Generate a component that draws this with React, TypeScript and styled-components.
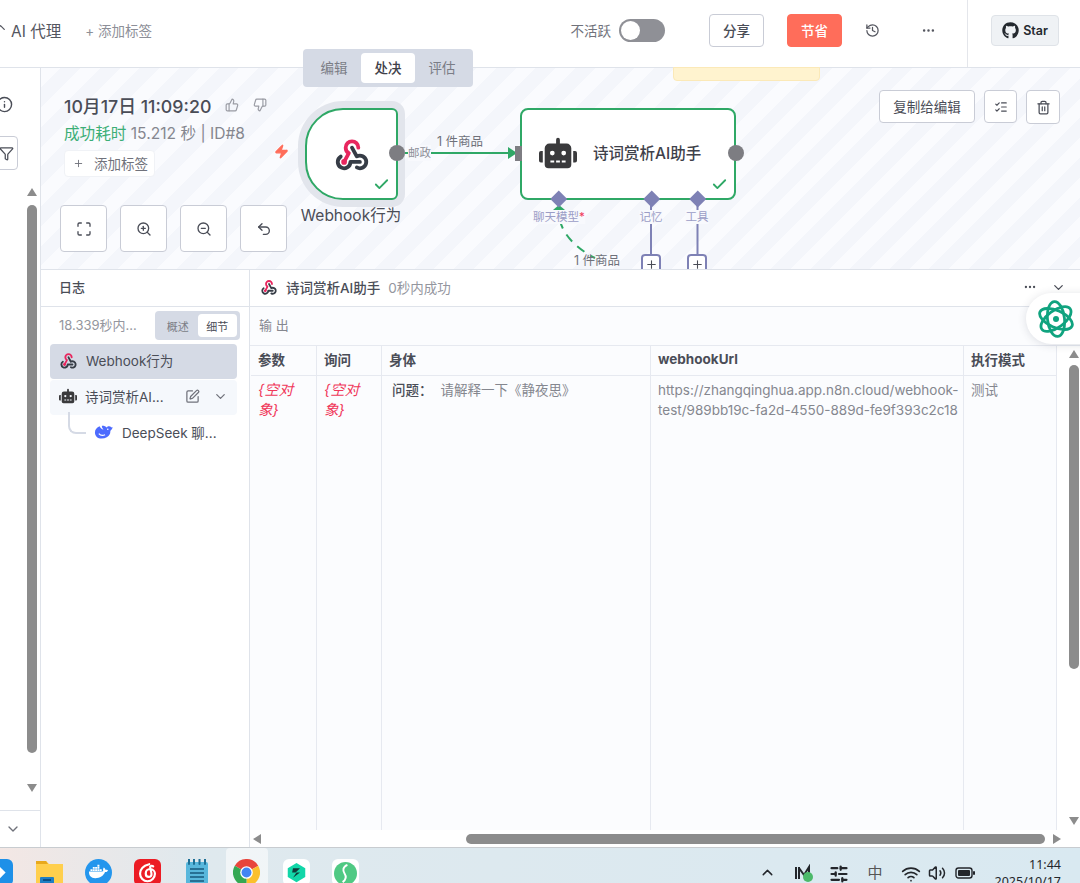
import React from 'react';
import styled, { createGlobalStyle } from 'styled-components';
import {
  Check, ChevronDown, ChevronUp, Ellipsis, Funnel, History, Info, ListChecks, Maximize,
  Plus, SlidersHorizontal, SquarePen, ThumbsDown, ThumbsUp, Trash2, Undo2, Volume2, Wifi, Zap, ZoomIn, ZoomOut,
} from 'lucide-react';
import { FaDocker, FaGithub, FaRobot } from 'react-icons/fa';

const FONT = `Inter, "Noto Sans CJK SC", "Noto Sans", sans-serif`;

const Global = createGlobalStyle`
  html, body { margin: 0; padding: 0; background: #fff; }
  * { box-sizing: border-box; }
  body { font-family: ${FONT}; color: #4a4d57; }
`;

const Page = styled.div`
  position: relative;
  width: 1080px;
  height: 883px;
  overflow: hidden;
  display: flex;
  flex-direction: column;
`;

/* ---------- header ---------- */
const Header = styled.header`
  height: 68px;
  flex: none;
  display: flex;
  align-items: center;
  border-bottom: 1px solid #dfe3ea;
  padding-bottom: 7px;
`;
const Crumb = styled.div`
  display: flex;
  align-items: center;
  font-size: 15.5px;
  color: #54565f;
  margin-left: -7px;
  gap: 3px;
  svg { margin-top: -5px; }
`;
const AddTag = styled.span`
  margin-left: 24px;
  font-size: 13.5px;
  color: #8d8f98;
`;
const HeaderRight = styled.div`
  margin-left: auto;
  display: flex;
  align-items: center;
  height: 100%;
`;
const InactiveText = styled.span`
  font-size: 13.5px;
  color: #70727b;
  margin-right: 8px;
`;
const Switch = styled.div`
  width: 46px;
  height: 23px;
  border-radius: 12px;
  background: #8f9096;
  padding: 2px;
  margin-right: 44px;
  &::before {
    content: '';
    display: block;
    width: 19px;
    height: 19px;
    border-radius: 50%;
    background: #fff;
  }
`;
const HeadButton = styled.button<{ $primary?: boolean }>`
  width: 55px;
  height: 33px;
  border-radius: 4px;
  border: 1px solid ${p => (p.$primary ? '#ff6d5a' : '#c9ccd6')};
  background: ${p => (p.$primary ? '#ff6d5a' : '#fff')};
  color: ${p => (p.$primary ? '#fff' : '#4a4d57')};
  font-family: ${FONT};
  font-size: 13.5px;
  font-weight: 500;
  margin-right: 23px;
  padding: 0;
`;
const HeadIcon = styled.span<{ $gap?: number }>`
  display: flex;
  color: #54565f;
  margin-left: ${p => p.$gap ?? 0}px;
`;
const HeadDivider = styled.div`
  width: 1px;
  height: calc(100% + 7px);
  margin: 0 0 -7px 31px;
  background: #e4e6eb;
`;
const StarButton = styled.div`
  width: 68px;
  height: 31px;
  margin: 0 21px 0 23px;
  border: 1px solid #dfe3e8;
  border-radius: 4px;
  background: #eff2f5;
  display: flex;
  align-items: center;
  justify-content: center;
  gap: 4px;
  font-size: 12.5px;
  font-weight: 600;
  color: #24292f;
`;

/* ---------- body ---------- */
const Body = styled.div`
  flex: 1;
  min-height: 0;
  display: flex;
`;
const Rail = styled.aside`
  width: 41px;
  flex: none;
  display: flex;
  flex-direction: column;
  border-right: 1px solid #dfe3ea;
  background: #fff;
`;
const RailIcon = styled.div`
  margin: 28px 0 0 -4px;
  display: flex;
  color: #4a4d57;
`;
const RailFilter = styled.div`
  width: 34px;
  height: 34px;
  margin: 23px 0 0 -16px;
  border: 1px solid #c9ccd6;
  border-radius: 4px;
  display: flex;
  align-items: center;
  justify-content: flex-end;
  padding-right: 3px;
  color: #4a4d57;
`;
const RailScroll = styled.div`
  flex: 1;
  display: flex;
  flex-direction: column;
  align-items: flex-end;
  padding: 18px 3px 18px 0;
`;
const Arrow = styled.i<{ $dir: 'up' | 'down' | 'left' | 'right' }>`
  display: block;
  flex: none;
  width: 0;
  height: 0;
  border-style: solid;
  border-color: transparent;
  ${p => (p.$dir === 'up' ? 'border-width: 0 5.5px 8px; border-bottom-color: #8c8c8c;' : '')}
  ${p => (p.$dir === 'down' ? 'border-width: 8px 5.5px 0; border-top-color: #8c8c8c;' : '')}
  ${p => (p.$dir === 'left' ? 'border-width: 5.5px 8px 5.5px 0; border-right-color: #8c8c8c;' : '')}
  ${p => (p.$dir === 'right' ? 'border-width: 5.5px 0 5.5px 8px; border-left-color: #8c8c8c;' : '')}
`;
const RailThumb = styled.div`
  flex: 1;
  width: 10px;
  margin: 9px 0 31px;
  border-radius: 5px;
  background: #8c8c8c;
`;
const RailFoot = styled.div`
  height: 37px;
  flex: none;
  display: flex;
  align-items: center;
  padding-left: 5px;
  border-top: 1px solid #dfe3ea;
  color: #6f717a;
`;
const Main = styled.main`
  flex: 1;
  min-width: 0;
  display: flex;
  flex-direction: column;
`;

/* ---------- canvas ---------- */
const Canvas = styled.section`
  position: relative;
  height: 201px;
  flex: none;
  background: repeating-linear-gradient(135deg, #fafbfe 0 14px, #f4f6fb 14px 28px);
`;
const Tabs = styled.div`
  position: absolute;
  left: 262px;
  top: -19px;
  width: 170px;
  height: 38px;
  padding: 4px;
  border-radius: 4px;
  background: #d5dae5;
  display: flex;
`;
const Tab = styled.div<{ $active?: boolean }>`
  flex: 1;
  display: flex;
  align-items: center;
  justify-content: center;
  padding-bottom: 2px;
  font-size: 13.5px;
  border-radius: 4px;
  background: ${p => (p.$active ? '#fff' : 'transparent')};
  color: ${p => (p.$active ? '#3f414a' : '#7b7d86')};
  font-weight: ${p => (p.$active ? 500 : 400)};
`;
const Sticky = styled.div`
  position: absolute;
  left: 632px;
  top: -1px;
  width: 147px;
  height: 14px;
  background: #fff3cf;
  border: 1px solid #fbe9b8;
  border-radius: 0 0 4px 4px;
`;
const RunInfo = styled.div`
  position: absolute;
  left: 23px;
  top: 25px;
  display: flex;
  flex-direction: column;
  align-items: flex-start;
`;
const RunTitle = styled.div`
  display: flex;
  align-items: center;
  height: 24px;
  font-size: 17.8px;
  font-weight: 500;
  color: #4a4d57;
  svg { color: #9a9ca4; margin-left: 14px; }
  svg + svg { margin-left: 14px; }
`;
const RunMeta = styled.div`
  margin-top: 6px;
  font-size: 15.6px;
  line-height: 22px;
  color: #85878f;
  white-space: nowrap;
  b { font-weight: 400; color: #3cae76; }
`;
const TagButton = styled.div`
  margin-top: 5px;
  width: 91px;
  height: 27px;
  background: #fff;
  border: 1px solid #f0f2f6;
  border-radius: 4px;
  display: flex;
  align-items: center;
  padding: 0 0 1px 8px;
  gap: 10px;
  font-size: 13.5px;
  color: #70727b;
`;
const Controls = styled.div`
  position: absolute;
  left: 19px;
  top: 137px;
  display: flex;
  gap: 13px;
`;
const IconButton = styled.div<{ $size?: number }>`
  width: ${p => p.$size ?? 47}px;
  height: ${p => p.$size ?? 47}px;
  background: #fff;
  border: 1px solid #c9ccd6;
  border-radius: 4px;
  display: flex;
  align-items: center;
  justify-content: center;
  color: #4a4d57;
`;
const CanvasActions = styled.div`
  position: absolute;
  right: 20px;
  top: 22px;
  display: flex;
  gap: 9px;
  align-items: flex-start;
`;
const CopyButton = styled.div`
  width: 96px;
  height: 33px;
  background: #fff;
  border: 1px solid #c9ccd6;
  border-radius: 4px;
  display: flex;
  align-items: center;
  justify-content: center;
  padding-bottom: 2px;
  font-size: 13.5px;
  color: #4a4d57;
`;
const WebhookNode = styled.div`
  position: absolute;
  left: 264px;
  top: 40px;
  width: 93px;
  height: 92px;
  background: #fff;
  border: 2px solid #2fa866;
  border-radius: 38px 6px 6px 38px;
  box-shadow: 0 0 0 7px #e2e5ec;
  display: flex;
  align-items: center;
  justify-content: center;
`;
const AgentNode = styled.div`
  position: absolute;
  left: 479px;
  top: 40px;
  width: 216px;
  height: 92px;
  background: #fff;
  border: 2px solid #2fa866;
  border-radius: 8px;
  display: flex;
  align-items: center;
  padding: 0 0 3px 17px;
  gap: 16px;
  font-size: 15.5px;
  font-weight: 500;
  color: #3f414a;
`;
const AgentTitle = styled.span`
  margin-top: -2px;
`;
const NodeCheck = styled.span`
  position: absolute;
  right: 6px;
  bottom: 5px;
  display: flex;
  color: #2fa866;
`;
const NodeLabel = styled.div`
  position: absolute;
  left: 250px;
  top: 135px;
  width: 120px;
  text-align: center;
  font-size: 15.5px;
  font-weight: 400;
  color: #4a4d57;
`;
const Bolt = styled.span`
  position: absolute;
  left: 233px;
  top: 76px;
  display: flex;
  color: #ff6d5a;
`;
const Dot = styled.span<{ $x: number }>`
  position: absolute;
  left: ${p => p.$x}px;
  top: 77px;
  width: 16px;
  height: 16px;
  border-radius: 50%;
  background: #7d7d82;
`;
const InputPort = styled.span`
  position: absolute;
  left: 474px;
  top: 78px;
  width: 7px;
  height: 15px;
  background: #7d7d82;
`;
const Diamond = styled.span<{ $x: number }>`
  position: absolute;
  left: ${p => p.$x}px;
  top: 125px;
  width: 11.5px;
  height: 11.5px;
  background: #7e81b5;
  transform: rotate(45deg);
`;
const PortLabel = styled.span<{ $x: number }>`
  position: absolute;
  left: ${p => p.$x}px;
  top: 142px;
  transform: translateX(-50%);
  font-size: 11.5px;
  line-height: 14px;
  color: #9b9dc6;
  white-space: nowrap;
  background: #f8f9fd;
  em { font-style: normal; color: #f0385a; }
`;
const EdgeText = styled.span<{ $x: number; $y: number; $muted?: boolean }>`
  position: absolute;
  left: ${p => p.$x}px;
  top: ${p => p.$y}px;
  font-size: ${p => (p.$muted ? 11.5 : 12.5)}px;
  line-height: 16px;
  color: ${p => (p.$muted ? '#8d8f98' : '#6f717a')};
  background: ${p => (p.$muted ? '#f8f9fd' : 'transparent')};
  white-space: nowrap;
`;
const AddBox = styled.span<{ $x: number }>`
  position: absolute;
  left: ${p => p.$x}px;
  top: 186px;
  width: 20px;
  height: 24px;
  background: #fff;
  border: 2px solid #7e81b5;
  border-radius: 4px;
  display: flex;
  align-items: flex-start;
  padding-top: 2px;
  justify-content: center;
  color: #4a4d57;
`;
const Wires = styled.svg`
  position: absolute;
  left: 0;
  top: 0;
  width: 1039px;
  height: 200px;
  overflow: hidden;
`;

/* ---------- logs ---------- */
const Logs = styled.section`
  position: relative;
  flex: 1;
  min-height: 0;
  display: flex;
  background: #fff;
  border-top: 1px solid #dfe3ea;
`;
const LogList = styled.div`
  width: 209px;
  flex: none;
  border-right: 1px solid #dfe3ea;
  display: flex;
  flex-direction: column;
`;
const LogHead = styled.div`
  height: 37px;
  flex: none;
  padding: 0 0 3px 18px;
  display: flex;
  align-items: center;
  border-bottom: 1px solid #dfe3ea;
  font-size: 13px;
  font-weight: 500;
  color: #4a4d57;
`;
const LogSummary = styled.div`
  display: flex;
  align-items: center;
  justify-content: space-between;
  padding: 4px 9px 0 18px;
  margin-bottom: 4px;
  font-size: 13px;
  color: #94969e;
`;
const SummaryText = styled.span`
  margin-top: -2px;
`;
const Toggle = styled.div`
  width: 85px;
  height: 29px;
  background: #d5dae5;
  border-radius: 4px;
  padding: 3px;
  display: flex;
`;
const ToggleItem = styled.div<{ $active?: boolean }>`
  flex: 1;
  display: flex;
  align-items: center;
  justify-content: center;
  border-radius: 4px;
  font-size: 11px;
  background: ${p => (p.$active ? '#fff' : 'transparent')};
  color: ${p => (p.$active ? '#4a4d57' : '#7b7d86')};
`;
const LogRow = styled.div<{ $bg: string }>`
  height: 35px;
  margin: 0 12px 1px 9px;
  padding: 0 9px 3px;
  border-radius: 4px;
  display: flex;
  align-items: center;
  gap: 8px;
  font-size: 13.5px;
  background: ${p => p.$bg};
  color: #4a4d57;
`;
const LogRowText = styled.span<{ $gap?: number }>`
  flex: 1;
  white-space: nowrap;
  margin-left: ${p => p.$gap ?? 0}px;
`;
const RowIcons = styled.span`
  display: flex;
  align-items: center;
  gap: 13px;
  color: #70727b;
`;
const SubRow = styled.div`
  height: 35px;
  margin-top: -1px;
  display: flex;
  align-items: center;
  padding: 0 0 1px 27px;
  font-size: 13.5px;
  color: #4a4d57;
`;
const Connector = styled.span`
  width: 18px;
  height: 22px;
  margin: -19px 8px 0 0;
  border-left: 2px solid #d5dae5;
  border-bottom: 2px solid #d5dae5;
  border-bottom-left-radius: 8px;
`;
const Detail = styled.div`
  position: relative;
  flex: 1;
  min-width: 0;
  display: flex;
  flex-direction: column;
`;
const DetailHead = styled.div`
  height: 37px;
  flex: none;
  display: flex;
  align-items: center;
  padding: 0 14px 2px 10px;
  gap: 8px;
  border-bottom: 1px solid #dfe3ea;
  font-size: 13.5px;
  font-weight: 500;
  color: #4a4d57;
  span { font-weight: 400; color: #94969e; }
`;
const DetailIcons = styled.div`
  margin-left: auto;
  display: flex;
  gap: 14px;
  color: #4a4d57;
`;
const OutputBar = styled.div`
  height: 39px;
  flex: none;
  display: flex;
  align-items: center;
  padding: 0 0 4px 9px;
  background: #fbfcfe;
  border-bottom: 1px solid #e6e9f0;
  font-size: 13px;
  color: #85878f;
`;
const TableWrap = styled.div`
  position: relative;
  flex: 1;
  min-height: 0;
  display: flex;
  flex-direction: column;
  background: #fff;
`;
const DataGrid = styled.div`
  flex: 1;
  min-height: 0;
  width: 807px;
  display: grid;
  padding-left: 1px;
  grid-template-columns: 66px 65px 269px 313px 93px;
  grid-template-rows: 30px 1fr;
  background: #fbfcfe;
`;
const HeadCell = styled.div`
  padding: 0 7px 3px;
  display: flex;
  align-items: center;
  font-size: 13.5px;
  font-weight: 700;
  color: #4a4d57;
  background: #fbfcfe;
  border-right: 1px solid #e6e9f0;
  border-bottom: 1px solid #e6e9f0;
`;
const BodyCell = styled.div`
  padding: 4px 3px 5px 7px;
  font-size: 13.5px;
  line-height: 20px;
  color: #85878f;
  border-right: 1px solid #e6e9f0;
  overflow-wrap: anywhere;
`;
const EmptyObject = styled.i`
  display: block;
  padding-right: 4px;
  font-size: 14.5px;
  color: #f0385a;
`;
const QuestionKey = styled.span`
  margin-left: 3px;
  color: #4a4d57;
  font-weight: 500;
  margin-right: 8px;
`;
const HScroll = styled.div`
  height: 17px;
  flex: none;
  display: flex;
  align-items: center;
  padding-left: 3px;
  background: #fff;
`;
const HThumb = styled.div`
  flex: none;
  width: 579px;
  height: 10px;
  margin: 0 8px 0 205px;
  border-radius: 5px;
  background: #8c8c8c;
`;
const VScroll = styled.div`
  position: absolute;
  right: 1px;
  top: 4px;
  bottom: 17px;
  width: 11px;
  display: flex;
  flex-direction: column;
  align-items: center;
`;
const VThumb = styled.div`
  flex: none;
  width: 10px;
  height: 304px;
  margin: 7px 0 148px;
  border-radius: 5px;
  background: #8c8c8c;
`;
const Assistant = styled.div`
  position: absolute;
  left: 776px;
  top: 23px;
  width: 70px;
  height: 51px;
  border-radius: 26px 0 0 26px;
  background: #fff;
  box-shadow: 0 1px 8px rgba(60, 70, 90, 0.16);
  display: flex;
  align-items: center;
  padding-left: 11px;
`;

/* ---------- taskbar ---------- */
const Taskbar = styled.footer`
  height: 36px;
  flex: none;
  display: flex;
  overflow: hidden;
  border-top: 1px solid #c8ccd0;
  background: linear-gradient(90deg, #f3e7e4 0, #dfe9ee 200px, #d9e9f1 100%);
`;
const AppSlot = styled.div<{ $active?: boolean }>`
  width: ${p => (p.$active ? 42 : 49.4)}px;
  margin: 0 ${p => (p.$active ? 3.7 : 0)}px;
  height: 36px;
  flex: none;
  display: flex;
  justify-content: center;
  padding-top: 11px;
  border-radius: 4px 4px 0 0;
  background: ${p => (p.$active ? 'rgba(255,255,255,0.55)' : 'transparent')};
`;
const AppList = styled.div`
  display: flex;
  margin-left: -25px;
`;
const AppTile = styled.div<{ $bg: string; $round?: boolean }>`
  width: 27px;
  height: 27px;
  border-radius: ${p => (p.$round ? '50%' : '6px')};
  background: ${p => p.$bg};
  display: flex;
  align-items: flex-start;
  justify-content: center;
  padding-top: 3px;
  color: #fff;
`;
const Tray = styled.div`
  margin-left: auto;
  display: flex;
  align-items: flex-start;
  padding: 16px 19px 0 0;
  color: #23262b;
`;
const TraySlot = styled.span<{ $gap: number }>`
  display: flex;
  margin-left: ${p => p.$gap}px;
`;
const ImeText = styled.span`
  font-size: 15px;
  line-height: 18px;
  color: #555;
`;
const Clock = styled.div`
  margin: -8px 0 0 19px;
  text-align: right;
  font-family: "Noto Sans", sans-serif;
  font-size: 12.5px;
  line-height: 17px;
  color: #23262b;
`;

/* ---------- drawings ---------- */
const WebhookLogo = ({ size = 38 }: { size?: number }) => (
  <svg width={size} height={size} viewBox="0 0 24 24" fill="none" strokeWidth="2.4" strokeLinecap="round" strokeLinejoin="round">
    <path d="M4.876 13.61a4 4 0 1 0 6.124 3.39h6" stroke="#363c46" />
    <path d="M15.066 20.502a4 4 0 1 0 1.934 -7.502c-.706 0 -1.424 .179 -2 .5l-3 -5.5" stroke="#363c46" />
    <path d="M16 8a4 4 0 1 0 -8 0c0 1.506 .77 2.818 2 3.5l-3 5.5" stroke="#e8265e" />
    <circle cx="7" cy="17" r="1.8" fill="#e8265e" />
  </svg>
);

const Whale = () => (
  <svg width="19" height="14" viewBox="0 0 24 18">
    <path fill="#4d6bfe" d="M23.5 2.5c-.6-.3-.9.3-1.3.6-.9-1-2-1.6-3.400-1.500-1.200-.1-1.900.6-2.400 1.500l-.2.1C14.700 1.700 12.800.9 10 1c-.6 2 1 3.600 2 5-2-1-4-2-5-4.500C3.500 3 1 5.500 1 9.500c0 4.700 3.600 8 8.500 8 5.500 0 8.700-2.200 10.500-5.500 1.200-2.200.3-3.700 1.200-5 .6-.9 1.400-.9 1.900-2.100.2-.7.500-2.100.400-2.400z" />
    <circle cx="17.500" cy="5.500" r="1" fill="#fff" />
    <path d="M6 11c2 2.500 5 3 8 1.500" stroke="#fff" strokeWidth="1.500" fill="none" />
  </svg>
);

const AssistantLogo = () => (
  <svg width="38" height="38" viewBox="0 0 38 38" fill="none" stroke="#10a37f" strokeWidth="2.800">
    <g transform="rotate(-6 19 19)">
      <ellipse cx="19" cy="19" rx="8.500" ry="17.500" />
      <ellipse cx="19" cy="19" rx="8.500" ry="17.500" transform="rotate(60 19 19)" />
      <ellipse cx="19" cy="19" rx="8.500" ry="17.500" transform="rotate(120 19 19)" />
    </g>
    <circle cx="19" cy="19" r="3" fill="#10a37f" stroke="none" />
  </svg>
);

const Folder = () => (
  <svg width="27" height="27" viewBox="0 0 27 27">
    <path d="M0 2h10l3 3h14v22H0z" fill="#ffcf4d" />
    <path d="M0 2h10l2 3H0z" fill="#e8a91c" />
    <rect x="4" y="18" width="14" height="9" rx="1" fill="#1f7fc4" />
    <rect x="7" y="20" width="8" height="2" fill="#0c4f86" />
  </svg>
);

const Netease = () => (
  <svg width="21" height="21" viewBox="0 0 24 24" fill="none" stroke="#fff" strokeWidth="2.500" strokeLinecap="round">
    <path d="M14 2.500C8 4 3.500 8 3.500 13.500a8.500 8.500 0 0 0 17 0c0-3-2.500-5.500-5.500-5.500s-5 2.500-5 5 1.500 4 3.500 4 3.500-1.500 3-4L15 5.500c.6-1.500 2.500-1.500 3.500-.5" />
  </svg>
);

const Notepad = () => (
  <svg width="24" height="27" viewBox="0 0 24 27">
    <rect x="1" y="3" width="22" height="24" rx="2" fill="#58b7dc" />
    <path d="M4 0v5M9 0v5M14.500 0v5M20 0v5" stroke="#1d6f96" strokeWidth="2" strokeLinecap="round" />
    <path d="M5 10h14M5 14h14M5 18h14M5 22h14" stroke="#17597c" strokeWidth="1.600" />
  </svg>
);

const Chrome = () => (
  <svg width="27" height="27" viewBox="0 0 24 24">
    <path d="M12 12L1.600 6A12 12 0 0 1 22.400 6Z" fill="#e8453c" />
    <path d="M12 12L22.400 6A12 12 0 0 1 12 24Z" fill="#fbc02d" />
    <path d="M12 12L12 24A12 12 0 0 1 1.600 6Z" fill="#34a853" />
    <circle cx="12" cy="12" r="5.600" fill="#fff" />
    <circle cx="12" cy="12" r="4.400" fill="#4285f4" />
  </svg>
);

const GemIcon = () => (
  <svg width="21" height="21" viewBox="0 0 24 24">
    <path d="M12 1l10 6v10l-10 6-10-6V7z" fill="#12d6a8" />
    <path d="M8 7h8l-5 5h5l-8 6 4-6H7z" fill="#103a3a" />
  </svg>
);

const SproutIcon = () => (
  <svg width="23" height="23" viewBox="0 0 24 24">
    <circle cx="12" cy="12" r="12" fill="#4fc983" />
    <path d="M14 3c-5 2-5 6-3 9s2 6-2 9" stroke="#fff" strokeWidth="2" fill="none" />
  </svg>
);

const StoreGlyph = () => (
  <svg width="21" height="21" viewBox="0 0 24 24">
    <path d="M12 5l7 7-7 7-7-7z" fill="#fff" />
  </svg>
);

const MeterIcon = () => (
  <svg width="20" height="18" viewBox="0 0 20 18">
    <path d="M2 3v12M5 3v12M5 4l5 7 5-8v12" stroke="#23262b" strokeWidth="2" fill="none" />
    <circle cx="14" cy="13" r="5" fill="#4cb96a" />
  </svg>
);

const BatteryIcon = () => (
  <svg width="20" height="18" viewBox="0 0 20 18">
    <rect x="1" y="4" width="16" height="10" rx="2.500" fill="none" stroke="#23262b" strokeWidth="1.400" />
    <rect x="3" y="6" width="12" height="6" rx="1" fill="#23262b" />
    <rect x="18" y="7" width="2" height="4" rx="1" fill="#23262b" />
  </svg>
);

const Wire = () => (
  <Wires viewBox="0 0 1039 200">
    <path d="M364 85H470" stroke="#2fa866" strokeWidth="2" fill="none" />
    <path d="M467 79l9 6-9 6z" fill="#2fa866" />
    <path d="M610 130V186M656.500 130V186" stroke="#7e81b5" strokeWidth="2" fill="none" />
    <path d="M512 142l6-5 6 5z" fill="#2fa866" />
    <path d="M519 152C522 168 538 182 554 190" stroke="#2fa866" strokeWidth="2" strokeDasharray="9 7" fill="none" />
  </Wires>
);

const columns = ['参数', '询问', '身体', 'webhookUrl', '执行模式'];

export default function App() {
  return (
    <Page>
      <Global />
      <Header>
        <Crumb>
          <ChevronUp size={15} />
          AI 代理
        </Crumb>
        <AddTag>+ 添加标签</AddTag>
        <HeaderRight>
          <InactiveText>不活跃</InactiveText>
          <Switch />
          <HeadButton>分享</HeadButton>
          <HeadButton $primary>节省</HeadButton>
          <HeadIcon><History size={15} /></HeadIcon>
          <HeadIcon $gap={41}><Ellipsis size={15} /></HeadIcon>
          <HeadDivider />
          <StarButton><FaGithub size={17} />Star</StarButton>
        </HeaderRight>
      </Header>
      <Body>
        <Rail>
          <RailIcon><Info size={17} /></RailIcon>
          <RailFilter><Funnel size={15} /></RailFilter>
          <RailScroll>
            <Arrow $dir="up" />
            <RailThumb />
            <Arrow $dir="down" />
          </RailScroll>
          <RailFoot><ChevronDown size={16} /></RailFoot>
        </Rail>
        <Main>
          <Canvas>
            <Sticky />
            <Wire />
            <Tabs>
              <Tab>编辑</Tab>
              <Tab $active>处决</Tab>
              <Tab>评估</Tab>
            </Tabs>
            <RunInfo>
              <RunTitle>
                10月17日 11:09:20
                <ThumbsUp size={14} />
                <ThumbsDown size={14} />
              </RunTitle>
              <RunMeta><b>成功耗时</b> 15.212 秒 | ID#8</RunMeta>
              <TagButton><Plus size={11} />添加标签</TagButton>
            </RunInfo>
            <Controls>
              <IconButton><Maximize size={16} /></IconButton>
              <IconButton><ZoomIn size={16} /></IconButton>
              <IconButton><ZoomOut size={16} /></IconButton>
              <IconButton><Undo2 size={16} /></IconButton>
            </Controls>
            <CanvasActions>
              <CopyButton>复制给编辑</CopyButton>
              <IconButton $size={33}><ListChecks size={14} /></IconButton>
              <IconButton $size={34}><Trash2 size={15} /></IconButton>
            </CanvasActions>
            <Bolt><Zap size={15} fill="#ff6d5a" /></Bolt>
            <WebhookNode>
              <WebhookLogo />
              <NodeCheck><Check size={17} strokeWidth={2.6} /></NodeCheck>
            </WebhookNode>
            <NodeLabel>Webhook行为</NodeLabel>
            <Dot $x={348} />
            <EdgeText $x={367} $y={77} $muted>邮政</EdgeText>
            <EdgeText $x={396} $y={66}>1 件商品</EdgeText>
            <AgentNode>
              <FaRobot size={38} color="#3a3a3c" />
              <AgentTitle>诗词赏析AI助手</AgentTitle>
              <NodeCheck><Check size={17} strokeWidth={2.6} /></NodeCheck>
            </AgentNode>
            <InputPort />
            <Dot $x={687} />
            <Diamond $x={512} />
            <Diamond $x={604.5} />
            <Diamond $x={651} />
            <PortLabel $x={518}>聊天模型<em>*</em></PortLabel>
            <PortLabel $x={610}>记忆</PortLabel>
            <PortLabel $x={656}>工具</PortLabel>
            <EdgeText $x={533} $y={185}>1 件商品</EdgeText>
            <AddBox $x={600}><Plus size={13} /></AddBox>
            <AddBox $x={646}><Plus size={13} /></AddBox>
          </Canvas>
          <Logs>
            <LogList>
              <LogHead>日志</LogHead>
              <LogSummary>
                <SummaryText>18.339秒内...</SummaryText>
                <Toggle>
                  <ToggleItem>概述</ToggleItem>
                  <ToggleItem $active>细节</ToggleItem>
                </Toggle>
              </LogSummary>
              <LogRow $bg="#d5dae5"><WebhookLogo size={19} /><LogRowText>Webhook行为</LogRowText></LogRow>
              <LogRow $bg="#f5f8fc">
                <FaRobot size={18} color="#3a3a3c" />
                <LogRowText>诗词赏析AI...</LogRowText>
                <RowIcons><SquarePen size={15} /><ChevronDown size={15} /></RowIcons>
              </LogRow>
              <SubRow><Connector /><Whale /><LogRowText $gap={9}>DeepSeek 聊...</LogRowText></SubRow>
            </LogList>
            <Detail>
              <DetailHead>
                <WebhookLogo size={18} />
                诗词赏析AI助手 <span>0秒内成功</span>
                <DetailIcons><Ellipsis size={14} /><ChevronDown size={15} /></DetailIcons>
              </DetailHead>
              <OutputBar>输 出</OutputBar>
              <TableWrap>
                <DataGrid>
                  {columns.map(c => <HeadCell key={c}>{c}</HeadCell>)}
                  <BodyCell><EmptyObject>{'{空对象}'}</EmptyObject></BodyCell>
                  <BodyCell><EmptyObject>{'{空对象}'}</EmptyObject></BodyCell>
                  <BodyCell><QuestionKey>问题：</QuestionKey>请解释一下《静夜思》</BodyCell>
                  <BodyCell>https://zhangqinghua.app.n8n.cloud/webhook-test/989bb19c-fa2d-4550-889d-fe9f393c2c18</BodyCell>
                  <BodyCell>测试</BodyCell>
                </DataGrid>
                <HScroll>
                  <Arrow $dir="left" />
                  <HThumb />
                  <Arrow $dir="right" />
                </HScroll>
                <VScroll>
                  <Arrow $dir="up" />
                  <VThumb />
                  <Arrow $dir="down" />
                </VScroll>
              </TableWrap>
              <Assistant><AssistantLogo /></Assistant>
            </Detail>
          </Logs>
        </Main>
      </Body>
      <Taskbar>
        <AppList>
          <AppSlot><AppTile $bg="#1e90e8"><StoreGlyph /></AppTile></AppSlot>
          <AppSlot><Folder /></AppSlot>
          <AppSlot><AppTile $bg="#2496ed" $round><FaDocker size={19} /></AppTile></AppSlot>
          <AppSlot><AppTile $bg="#ec1c24"><Netease /></AppTile></AppSlot>
          <AppSlot><Notepad /></AppSlot>
          <AppSlot $active><Chrome /></AppSlot>
          <AppSlot><AppTile $bg="#fff"><GemIcon /></AppTile></AppSlot>
          <AppSlot><AppTile $bg="#fff"><SproutIcon /></AppTile></AppSlot>
        </AppList>
        <Tray>
          <TraySlot $gap={0}><ChevronUp size={17} /></TraySlot>
          <TraySlot $gap={18}><MeterIcon /></TraySlot>
          <TraySlot $gap={15}><SlidersHorizontal size={20} strokeWidth={2.6} /></TraySlot>
          <TraySlot $gap={18}><ImeText>中</ImeText></TraySlot>
          <TraySlot $gap={19}><Wifi size={20} /></TraySlot>
          <TraySlot $gap={7}><Volume2 size={18} /></TraySlot>
          <TraySlot $gap={9}><BatteryIcon /></TraySlot>
          <Clock>11:44<br />2025/10/17</Clock>
        </Tray>
      </Taskbar>
    </Page>
  );
}
